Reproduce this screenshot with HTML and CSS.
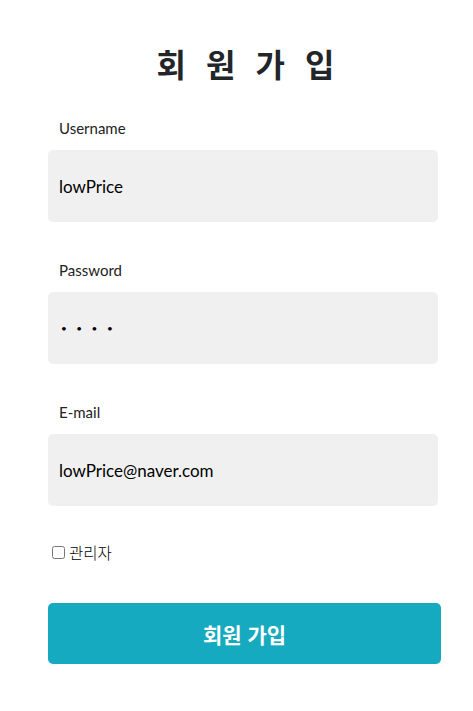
FILE: index.html
```html
<!DOCTYPE html>
<html lang="ko">
<head>
<meta charset="utf-8">
<title>회원 가입</title>
<link rel="stylesheet" href="styles.css">
</head>
<body>
<form class="signup">
  <h1 class="title">회원가입</h1>
  <div class="field">
    <label class="field-label" for="username">Username</label>
    <input class="field-input" id="username" type="text" value="lowPrice">
  </div>
  <div class="field">
    <label class="field-label" for="password">Password</label>
    <input class="field-input field-input--password" id="password" type="password" value="1234">
  </div>
  <div class="field">
    <label class="field-label" for="email">E-mail</label>
    <input class="field-input" id="email" type="text" value="lowPrice@naver.com">
  </div>
  <div class="admin-row">
    <input class="admin-check" id="admin" type="checkbox"><label class="admin-label" for="admin">관리자</label>
  </div>
  <button class="submit" type="button">회원 가입</button>
</form>
</body>
</html>
```

FILE: styles.css
```css
html, body {
  margin: 0;
  padding: 0;
  background: #ffffff;
}

body {
  font-family: "Lato", "Noto Sans CJK KR", sans-serif;
  color: #222222;
}

.signup {
  width: 393px;
  margin-left: 48px;
  padding-top: 43px;
  display: flex;
  flex-direction: column;
}

.title {
  margin: 0;
  font-family: "Noto Sans CJK KR", sans-serif;
  font-size: 32px;
  line-height: 40px;
  font-weight: 700;
  color: #222529;
  text-align: center;
  letter-spacing: 20px;
  padding-left: 22px;
}

.field {
  display: flex;
  flex-direction: column;
}

.field:first-of-type {
  margin-top: 35px;
}

.field + .field {
  margin-top: 38px;
}

.field-label {
  font-family: "Lato", sans-serif;
  font-size: 15px;
  line-height: 20px;
  padding-left: 11px;
  color: #222222;
}

.field-input {
  margin-top: 12px;
  box-sizing: border-box;
  width: 390px;
  height: 72px;
  border: none;
  border-radius: 5px;
  background: #f0f0f0;
  padding: 0 11px;
  font-family: "Lato", sans-serif;
  font-size: 17px;
  color: #000000;
  outline: none;
}

.field-input--password {
  font-size: 10px;
  letter-spacing: 9.5px;
  padding-left: 13px;
}

.admin-row {
  margin-top: 36px;
  display: flex;
  align-items: center;
  height: 20px;
}

.admin-check {
  margin: 3px 3px 3px 4px;
  width: 13px;
  height: 13px;
}

.admin-label {
  font-family: "Noto Sans CJK KR", sans-serif;
  font-size: 15.5px;
  line-height: 20px;
  font-weight: 300;
  color: #000000;
  margin-left: 1px;
}

.submit {
  margin-top: 41px;
  width: 100%;
  height: 61px;
  border: none;
  border-radius: 5px;
  background: #16aac1;
  color: #ffffff;
  font-family: "Noto Sans CJK KR", sans-serif;
  font-size: 21px;
  font-weight: 700;
  padding: 0;
}
```
